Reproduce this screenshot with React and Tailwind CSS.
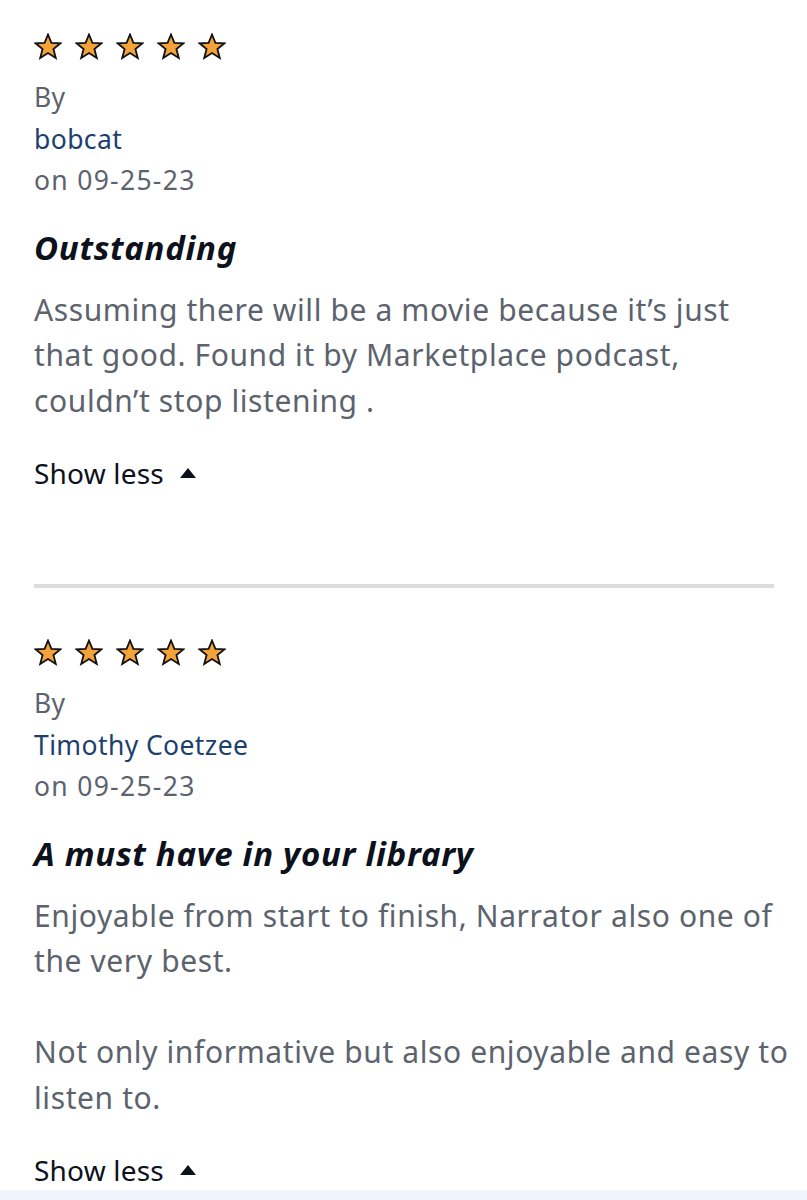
import React from 'react'

const font = { fontFamily: '"Noto Sans", "Open Sans", sans-serif' }

function Star() {
  return (
    <svg width="28" height="27" viewBox="0 0 28 27" className="shrink-0">
      <polygon
        points="14,1.5 17.4,9.8 26.5,10.3 19.4,16 21.8,25 14,20 6.2,25 8.6,16 1.5,10.3 10.6,9.8"
        fill="#f3a33a"
        stroke="#111"
        strokeWidth="1.8"
        strokeLinejoin="miter"
      />
    </svg>
  )
}

function Review({ author, date, title, body }) {
  return (
    <div>
      <div className="flex items-center gap-[13px] h-[27px]">
        {[0, 1, 2, 3, 4].map(i => <Star key={i} />)}
      </div>
      <div className="mt-[17px] text-[26.5px] leading-[41.5px] tracking-[0.4px] text-[#5c636d]">
        <div>By</div>
        <div className="text-[#1d3f6d]">{author}</div>
        <div className="tracking-[1.3px]">on {date}</div>
      </div>
      <h3 className="mt-[26px] text-[33px] leading-[40px] font-bold italic text-[#0c111b] tracking-[0.7px]">{title}</h3>
      <div className="mt-[19px] w-[758px] text-[30px] leading-[45.5px] tracking-[0.6px] text-[#5c636d]">
        {body.map((p, i) => (
          <p key={i} className={i > 0 ? 'mt-[45.5px]' : ''}>{p}</p>
        ))}
      </div>
      <button className="mt-[32px] flex items-center gap-[16px] text-[28px] leading-[36px] tracking-[0.2px] text-[#0c111b]">
        Show less
        <svg width="16" height="10" viewBox="0 0 16 10"><polygon points="8,0 16,10 0,10" fill="#0c111b" /></svg>
      </button>
    </div>
  )
}

export default function App() {
  return (
    <div className="w-[807px] h-[1200px] bg-white overflow-hidden flex flex-col" style={font}>
      <div className="pl-[34px] pt-[33px] flex-1">
        <Review
          author="bobcat"
          date="09-25-23"
          title="Outstanding"
          body={["Assuming there will be a movie because it’s just that good. Found it by Marketplace podcast, couldn’t stop listening ."]}
        />
        <div className="mt-[93px] h-[4px] bg-[#dcdcdc] w-[740px]" />
        <div className="mt-[51px]">
          <Review
            author="Timothy Coetzee"
            date="09-25-23"
            title="A must have in your library"
            body={["Enjoyable from start to finish, Narrator also one of the very best.", "Not only informative but also enjoyable and easy to listen to."]}
          />
        </div>
      </div>
      <div className="h-[10px] bg-[#f0f5fd] shrink-0" />
    </div>
  )
}
